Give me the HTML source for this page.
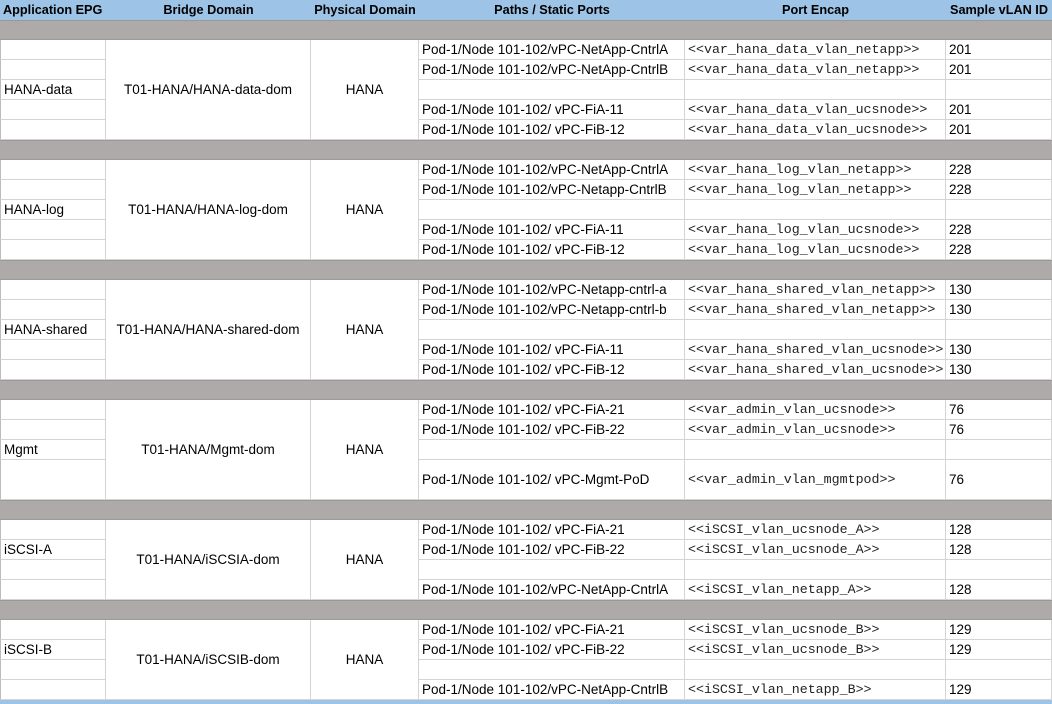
<!DOCTYPE html>
<html><head><meta charset="utf-8"><style>
html,body{margin:0;padding:0;width:1052px;height:704px;overflow:hidden;background:#fff;}
body{position:relative;font-family:"Liberation Sans",sans-serif;font-size:13.5px;color:#000;}
div{position:absolute;box-sizing:border-box;white-space:nowrap;overflow:hidden;}
.x{border-right:1px solid #d4d4d4;border-bottom:1px solid #d4d4d4;height:20px;line-height:19px;padding-left:3px;}
.ctr{display:flex;align-items:center;justify-content:center;padding-left:0;}
.mid{display:flex;align-items:center;}
.c1{left:0;width:106px;border-left:1px solid #bdbdbd;}
.c2{left:106px;width:205px;}
.c3{left:311px;width:108px;}
.c4{left:419px;width:266px;}
.c5{left:685px;width:261px;font-family:"Liberation Mono",monospace;font-size:13.3px;color:#222;}
.c6{left:946px;width:106px;}
.g{left:0;width:1052px;height:20px;background:#aeaaaa;border-top:1px solid #999;border-bottom:1px solid #9a9a9a;}
.hd{top:0;height:20px;background:#9dc3e6;font-weight:bold;line-height:20px;font-size:12.7px;}
</style></head><body>
<div class="hd" style="left:0;width:1052px"></div>
<div class="hd" style="left:3px;width:103px">Application EPG</div>
<div class="hd" style="left:106px;width:205px;text-align:center">Bridge Domain</div>
<div class="hd" style="left:311px;width:108px;text-align:center">Physical Domain</div>
<div class="hd" style="left:419px;width:266px;text-align:center">Paths / Static Ports</div>
<div class="hd" style="left:685px;width:261px;text-align:center">Port Encap</div>
<div class="hd" style="left:946px;width:106px;text-align:center">Sample vLAN ID</div>

<div class="g" style="top:20px"></div>
<div class="g" style="top:140px"></div>
<div class="g" style="top:260px"></div>
<div class="g" style="top:380px"></div>
<div class="g" style="top:500px"></div>
<div class="g" style="top:600px"></div>
<div style="left:0;top:700px;width:1052px;height:4px;background:#9dc3e6"></div>

<!-- Group 1 -->
<div class="x c1" style="top:40px"></div><div class="x c1" style="top:60px"></div><div class="x c1" style="top:80px">HANA-data</div><div class="x c1" style="top:100px"></div><div class="x c1" style="top:120px"></div>
<div class="x c2 ctr" style="top:40px;height:100px">T01-HANA/HANA-data-dom</div>
<div class="x c3 ctr" style="top:40px;height:100px">HANA</div>
<div class="x c4" style="top:40px">Pod-1/Node 101-102/vPC-NetApp-CntrlA</div><div class="x c4" style="top:60px">Pod-1/Node 101-102/vPC-NetApp-CntrlB</div><div class="x c4" style="top:80px"></div><div class="x c4" style="top:100px">Pod-1/Node 101-102/ vPC-FiA-11</div><div class="x c4" style="top:120px">Pod-1/Node 101-102/ vPC-FiB-12</div>
<div class="x c5" style="top:40px">&lt;&lt;var_hana_data_vlan_netapp&gt;&gt;</div><div class="x c5" style="top:60px">&lt;&lt;var_hana_data_vlan_netapp&gt;&gt;</div><div class="x c5" style="top:80px"></div><div class="x c5" style="top:100px">&lt;&lt;var_hana_data_vlan_ucsnode&gt;&gt;</div><div class="x c5" style="top:120px">&lt;&lt;var_hana_data_vlan_ucsnode&gt;&gt;</div>
<div class="x c6" style="top:40px">201</div><div class="x c6" style="top:60px">201</div><div class="x c6" style="top:80px"></div><div class="x c6" style="top:100px">201</div><div class="x c6" style="top:120px">201</div>

<!-- Group 2 -->
<div class="x c1" style="top:160px"></div><div class="x c1" style="top:180px"></div><div class="x c1" style="top:200px">HANA-log</div><div class="x c1" style="top:220px"></div><div class="x c1" style="top:240px"></div>
<div class="x c2 ctr" style="top:160px;height:100px">T01-HANA/HANA-log-dom</div>
<div class="x c3 ctr" style="top:160px;height:100px">HANA</div>
<div class="x c4" style="top:160px">Pod-1/Node 101-102/vPC-NetApp-CntrlA</div><div class="x c4" style="top:180px">Pod-1/Node 101-102/vPC-Netapp-CntrlB</div><div class="x c4" style="top:200px"></div><div class="x c4" style="top:220px">Pod-1/Node 101-102/ vPC-FiA-11</div><div class="x c4" style="top:240px">Pod-1/Node 101-102/ vPC-FiB-12</div>
<div class="x c5" style="top:160px">&lt;&lt;var_hana_log_vlan_netapp&gt;&gt;</div><div class="x c5" style="top:180px">&lt;&lt;var_hana_log_vlan_netapp&gt;&gt;</div><div class="x c5" style="top:200px"></div><div class="x c5" style="top:220px">&lt;&lt;var_hana_log_vlan_ucsnode&gt;&gt;</div><div class="x c5" style="top:240px">&lt;&lt;var_hana_log_vlan_ucsnode&gt;&gt;</div>
<div class="x c6" style="top:160px">228</div><div class="x c6" style="top:180px">228</div><div class="x c6" style="top:200px"></div><div class="x c6" style="top:220px">228</div><div class="x c6" style="top:240px">228</div>

<!-- Group 3 -->
<div class="x c1" style="top:280px"></div><div class="x c1" style="top:300px"></div><div class="x c1" style="top:320px">HANA-shared</div><div class="x c1" style="top:340px"></div><div class="x c1" style="top:360px"></div>
<div class="x c2 ctr" style="top:280px;height:100px">T01-HANA/HANA-shared-dom</div>
<div class="x c3 ctr" style="top:280px;height:100px">HANA</div>
<div class="x c4" style="top:280px">Pod-1/Node 101-102/vPC-Netapp-cntrl-a</div><div class="x c4" style="top:300px">Pod-1/Node 101-102/vPC-Netapp-cntrl-b</div><div class="x c4" style="top:320px"></div><div class="x c4" style="top:340px">Pod-1/Node 101-102/ vPC-FiA-11</div><div class="x c4" style="top:360px">Pod-1/Node 101-102/ vPC-FiB-12</div>
<div class="x c5" style="top:280px">&lt;&lt;var_hana_shared_vlan_netapp&gt;&gt;</div><div class="x c5" style="top:300px">&lt;&lt;var_hana_shared_vlan_netapp&gt;&gt;</div><div class="x c5" style="top:320px"></div><div class="x c5" style="top:340px">&lt;&lt;var_hana_shared_vlan_ucsnode&gt;&gt;</div><div class="x c5" style="top:360px">&lt;&lt;var_hana_shared_vlan_ucsnode&gt;&gt;</div>
<div class="x c6" style="top:280px">130</div><div class="x c6" style="top:300px">130</div><div class="x c6" style="top:320px"></div><div class="x c6" style="top:340px">130</div><div class="x c6" style="top:360px">130</div>

<!-- Mgmt -->
<div class="x c1" style="top:400px"></div><div class="x c1" style="top:420px"></div><div class="x c1" style="top:440px">Mgmt</div><div class="x c1" style="top:460px;height:40px"></div>
<div class="x c2 ctr" style="top:400px;height:100px">T01-HANA/Mgmt-dom</div>
<div class="x c3 ctr" style="top:400px;height:100px">HANA</div>
<div class="x c4" style="top:400px">Pod-1/Node 101-102/ vPC-FiA-21</div><div class="x c4" style="top:420px">Pod-1/Node 101-102/ vPC-FiB-22</div><div class="x c4" style="top:440px"></div><div class="x c4 mid" style="top:460px;height:40px">Pod-1/Node 101-102/ vPC-Mgmt-PoD</div>
<div class="x c5" style="top:400px">&lt;&lt;var_admin_vlan_ucsnode&gt;&gt;</div><div class="x c5" style="top:420px">&lt;&lt;var_admin_vlan_ucsnode&gt;&gt;</div><div class="x c5" style="top:440px"></div><div class="x c5 mid" style="top:460px;height:40px">&lt;&lt;var_admin_vlan_mgmtpod&gt;&gt;</div>
<div class="x c6" style="top:400px">76</div><div class="x c6" style="top:420px">76</div><div class="x c6" style="top:440px"></div><div class="x c6 mid" style="top:460px;height:40px">76</div>

<!-- iSCSI-A -->
<div class="x c1" style="top:520px"></div><div class="x c1" style="top:540px">iSCSI-A</div><div class="x c1" style="top:560px"></div><div class="x c1" style="top:580px"></div>
<div class="x c2 ctr" style="top:520px;height:80px">T01-HANA/iSCSIA-dom</div>
<div class="x c3 ctr" style="top:520px;height:80px">HANA</div>
<div class="x c4" style="top:520px">Pod-1/Node 101-102/ vPC-FiA-21</div><div class="x c4" style="top:540px">Pod-1/Node 101-102/ vPC-FiB-22</div><div class="x c4" style="top:560px"></div><div class="x c4" style="top:580px">Pod-1/Node 101-102/vPC-NetApp-CntrlA</div>
<div class="x c5" style="top:520px">&lt;&lt;iSCSI_vlan_ucsnode_A&gt;&gt;</div><div class="x c5" style="top:540px">&lt;&lt;iSCSI_vlan_ucsnode_A&gt;&gt;</div><div class="x c5" style="top:560px"></div><div class="x c5" style="top:580px">&lt;&lt;iSCSI_vlan_netapp_A&gt;&gt;</div>
<div class="x c6" style="top:520px">128</div><div class="x c6" style="top:540px">128</div><div class="x c6" style="top:560px"></div><div class="x c6" style="top:580px">128</div>

<!-- iSCSI-B -->
<div class="x c1" style="top:620px"></div><div class="x c1" style="top:640px">iSCSI-B</div><div class="x c1" style="top:660px"></div><div class="x c1" style="top:680px"></div>
<div class="x c2 ctr" style="top:620px;height:80px">T01-HANA/iSCSIB-dom</div>
<div class="x c3 ctr" style="top:620px;height:80px">HANA</div>
<div class="x c4" style="top:620px">Pod-1/Node 101-102/ vPC-FiA-21</div><div class="x c4" style="top:640px">Pod-1/Node 101-102/ vPC-FiB-22</div><div class="x c4" style="top:660px"></div><div class="x c4" style="top:680px">Pod-1/Node 101-102/vPC-NetApp-CntrlB</div>
<div class="x c5" style="top:620px">&lt;&lt;iSCSI_vlan_ucsnode_B&gt;&gt;</div><div class="x c5" style="top:640px">&lt;&lt;iSCSI_vlan_ucsnode_B&gt;&gt;</div><div class="x c5" style="top:660px"></div><div class="x c5" style="top:680px">&lt;&lt;iSCSI_vlan_netapp_B&gt;&gt;</div>
<div class="x c6" style="top:620px">129</div><div class="x c6" style="top:640px">129</div><div class="x c6" style="top:660px"></div><div class="x c6" style="top:680px">129</div>
</body></html>
